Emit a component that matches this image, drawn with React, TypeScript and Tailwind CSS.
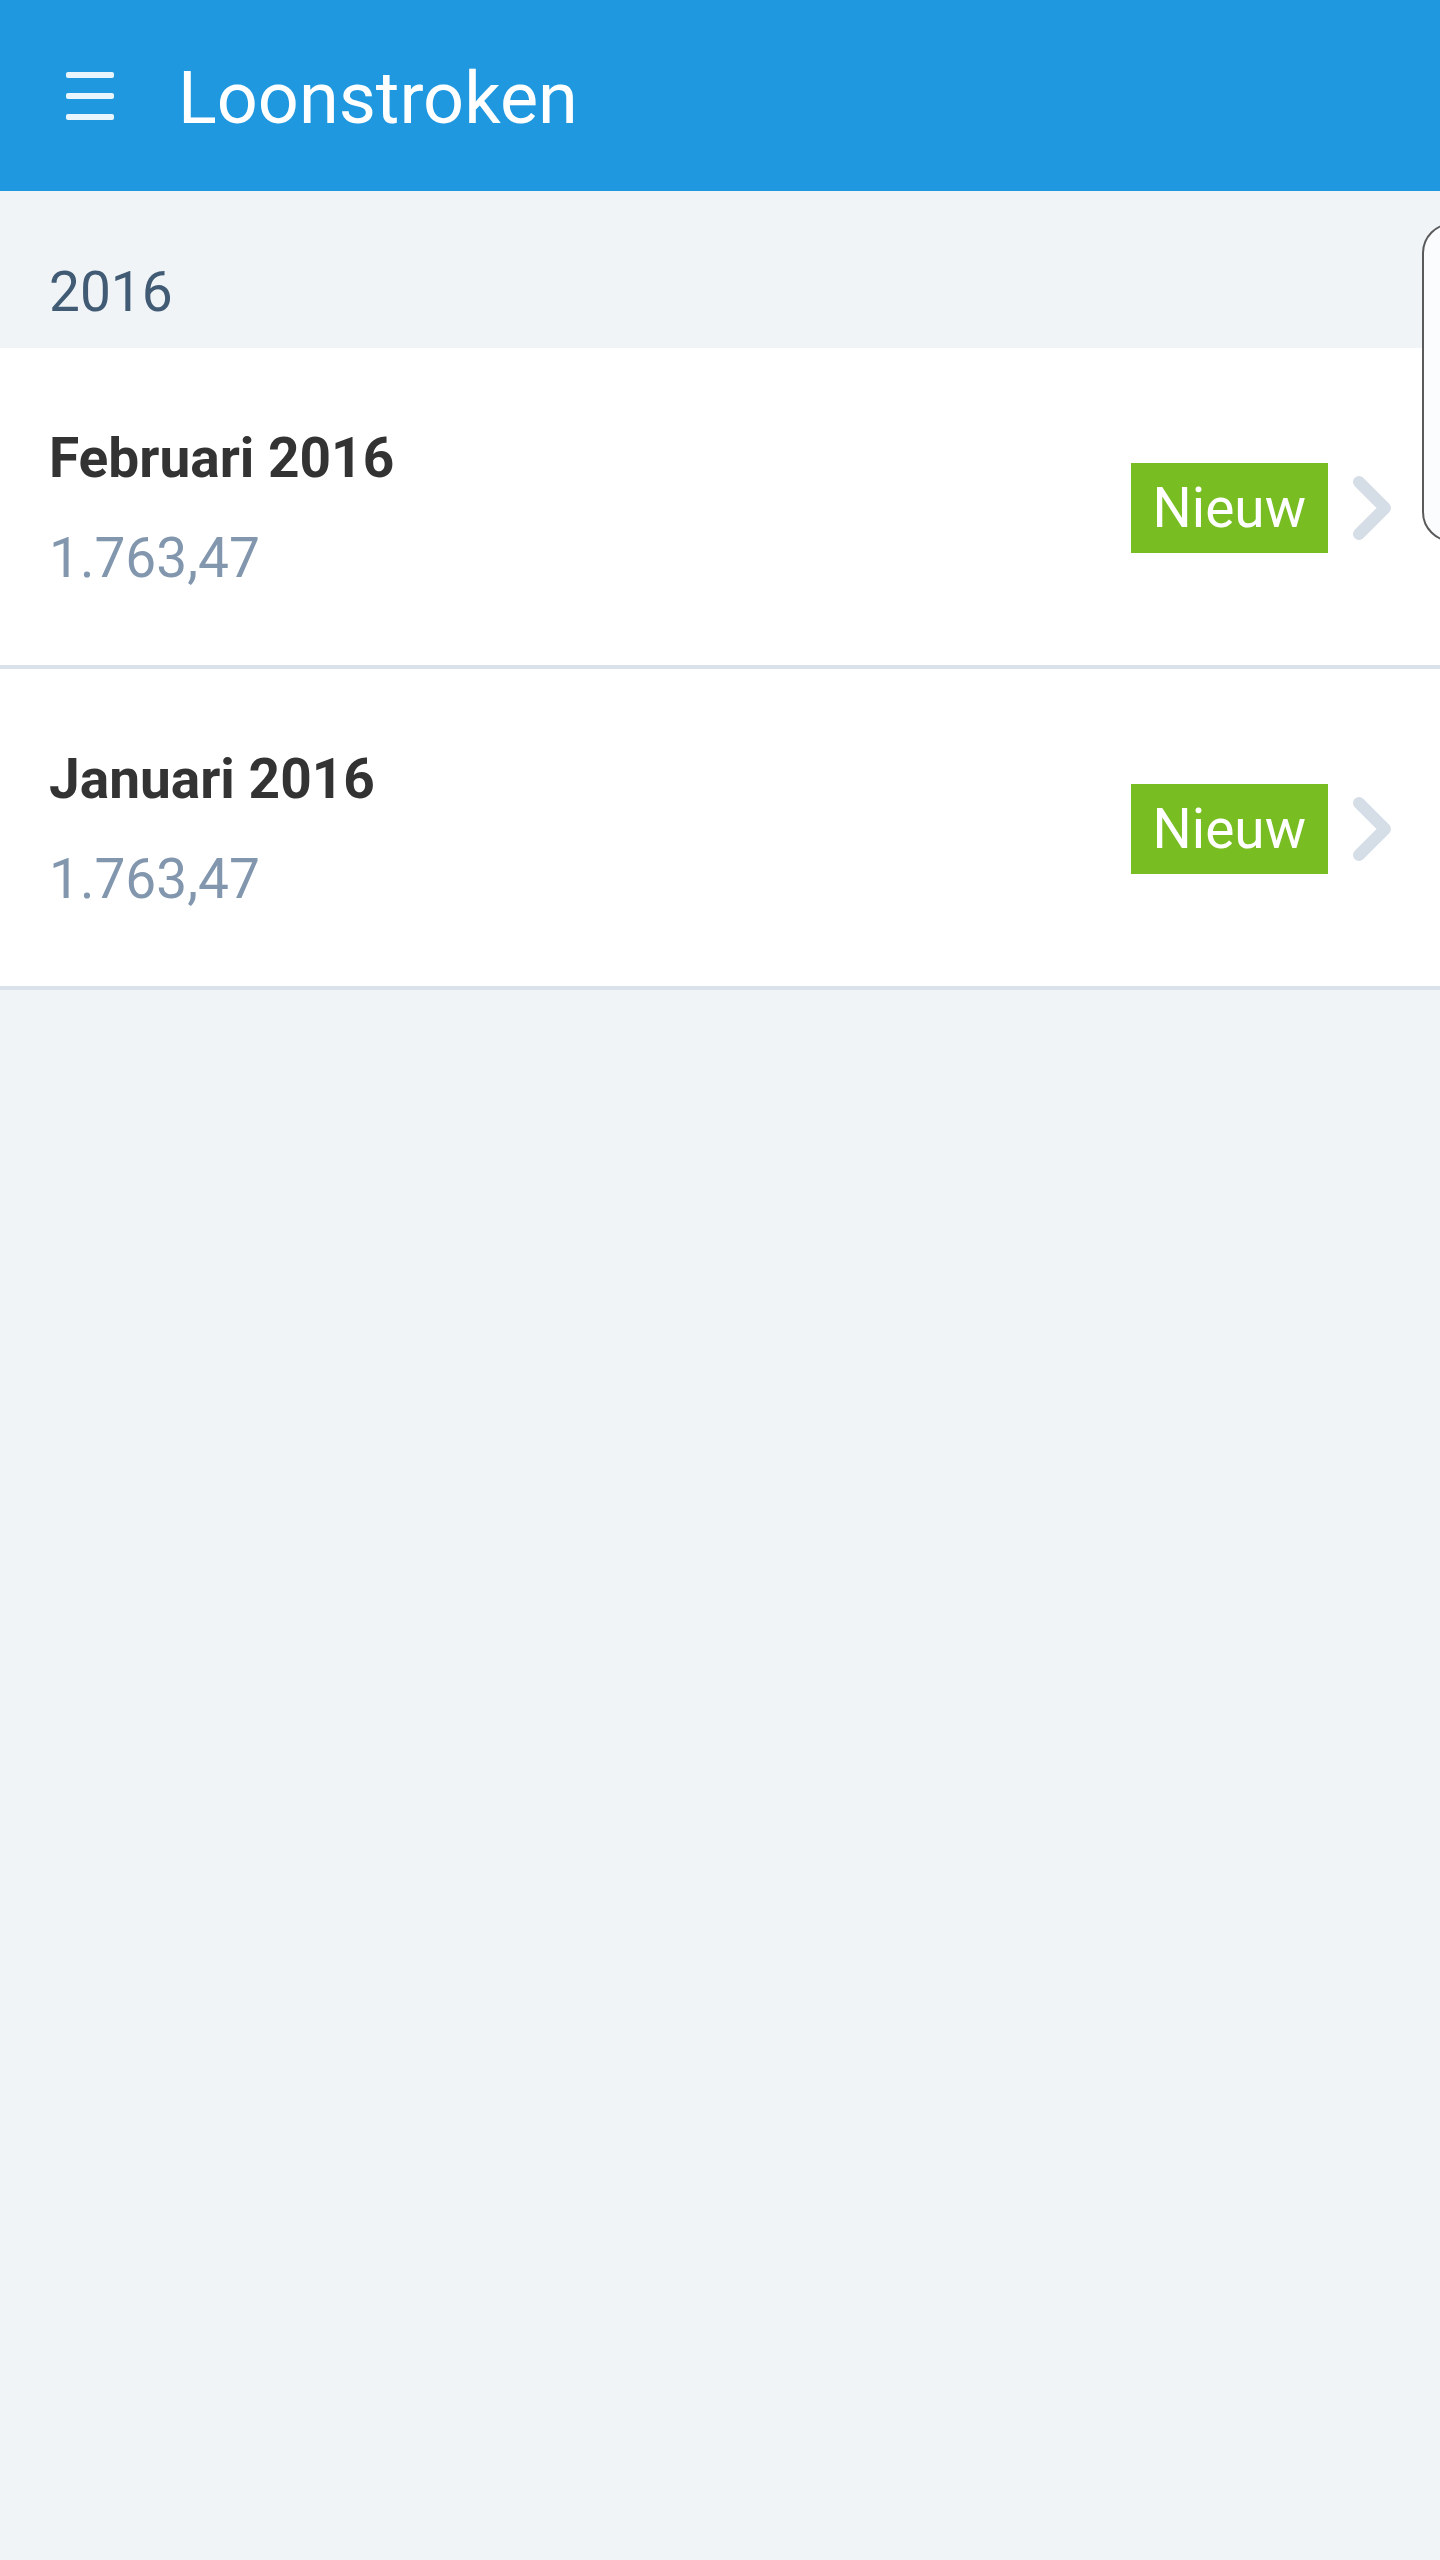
import React from 'react';

type Payslip = {
    month: string;
    amount: string;
    isNew: boolean;
};

const payslips: Payslip[] = [
    { month: 'Februari 2016', amount: '1.763,47', isNew: true },
    { month: 'Januari 2016', amount: '1.763,47', isNew: true },
];

function Chevron() {
    return (
        <svg width="40" height="66" viewBox="0 0 40 66" className="shrink-0">
            <polyline
                points="7,7 33,33 7,59"
                fill="none"
                stroke="#d5dde6"
                strokeWidth="12"
                strokeLinecap="round"
                strokeLinejoin="round"
            />
        </svg>
    );
}

function PayslipRow({ item }: { item: Payslip }) {
    return (
        <div className="flex items-center bg-white border-b-4 border-[#d9e2eb] pl-[49px] pr-[48px] pt-[77px] pb-[74px]">
            <div className="flex flex-col gap-[34px] flex-1">
                <p className="text-[55px] leading-[66px] font-bold text-[#333333]">{item.month}</p>
                <p className="text-[55px] leading-[66px] text-[#8297ae]">{item.amount}</p>
            </div>
            {item.isNew && (
                <span className="bg-[#78bd22] text-white text-[55px] leading-[90px] h-[90px] px-[22px]">Nieuw</span>
            )}
            <div className="ml-[24px]">
                <Chevron />
            </div>
        </div>
    );
}

export default function App() {
    return (
        <div
            className="relative w-[1440px] min-h-[2560px] overflow-hidden bg-[#f0f4f7]"
            style={{ fontFamily: 'Roboto, "Noto Sans", sans-serif' }}
        >
            <header className="flex items-center h-[191px] bg-[#1f98e0]">
                <div className="flex flex-col gap-[15px] ml-[66px] w-[48px]">
                    <div className="h-[6px] bg-white/90 rounded-[2px]" />
                    <div className="h-[6px] bg-white/90 rounded-[2px]" />
                    <div className="h-[6px] bg-white/90 rounded-[2px]" />
                </div>
                <h1 className="ml-[64px] text-[72px] leading-none text-white pt-[6px]">Loonstroken</h1>
            </header>

            <div className="pl-[49px] pt-[68px] pb-[23px]">
                <p className="text-[55px] leading-[66px] text-[#415b75]">2016</p>
            </div>

            <div>
                {payslips.map((p, i) => (
                    <PayslipRow key={i} item={p} />
                ))}
            </div>

            {/* edge handle overlay */}
            <div className="absolute left-[1422px] top-[223px] w-[60px] h-[319px] rounded-[30px] border-2 border-[#5a5a5a] bg-[#fbfcfe]" />
        </div>
    );
}
